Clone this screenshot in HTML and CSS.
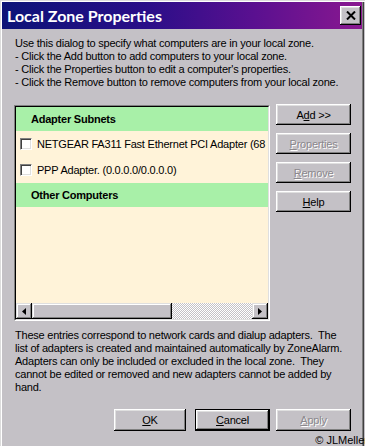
FILE: index.html
```html
<!DOCTYPE html>
<html>
<head>
<meta charset="utf-8">
<title>Local Zone Properties</title>
<link rel="stylesheet" href="styles.css">
</head>
<body>
<div class="window">
  <div class="titlebar">
    <span class="title">Local Zone Properties</span>
    <button class="close" aria-label="Close"><svg width="10" height="9" viewBox="0 0 10 9"><path d="M1 0.5 L9 8.5 M9 0.5 L1 8.5" stroke="#000" stroke-width="2" fill="none"/></svg></button>
  </div>
  <div class="content">
    <p class="intro">Use this dialog to specify what computers are in your local zone.<br>- Click the Add button to add computers to your local zone.<br>- Click the Properties button to edit a computer's properties.<br>- Click the Remove button to remove computers from your local zone.</p>
    <div class="main">
      <div class="listbox">
        <div class="listbox-inner">
          <div class="list">
            <div class="group">Adapter Subnets</div>
            <div class="item"><span class="check"></span><span class="label">NETGEAR FA311 Fast Ethernet PCI Adapter (68</span></div>
            <div class="item"><span class="check"></span><span class="label">PPP Adapter. (0.0.0.0/0.0.0.0)</span></div>
            <div class="group">Other Computers</div>
          </div>
          <div class="hscroll">
            <span class="sb-btn"><svg width="4" height="7" viewBox="0 0 4 7"><path d="M4 0 L0 3.5 L4 7 Z" fill="#000"/></svg></span>
            <span class="thumb"></span>
            <span class="track"></span>
            <span class="sb-btn"><svg width="4" height="7" viewBox="0 0 4 7"><path d="M0 0 L4 3.5 L0 7 Z" fill="#000"/></svg></span>
          </div>
        </div>
      </div>
      <div class="side">
        <button class="btn">A<u>d</u>d &gt;&gt;</button>
        <button class="btn disabled"><u>P</u>roperties</button>
        <button class="btn disabled"><u>R</u>emove</button>
        <button class="btn"><u>H</u>elp</button>
      </div>
    </div>
    <p class="note">These entries correspond to network cards and dialup adapters.&nbsp; The<br>list of adapters is created and maintained automatically by ZoneAlarm.<br>Adapters can only be included or excluded in the local zone.&nbsp; They<br>cannot be edited or removed and new adapters cannot be added by<br>hand.</p>
    <div class="footer">
      <button class="btn ok"><u>O</u>K</button>
      <button class="btn cancel default"><u>C</u>ancel</button>
      <button class="btn apply disabled"><u>A</u>pply</button>
    </div>
  </div>
  <div class="copyright">© JLMeller</div>
</div>
</body>
</html>
```

FILE: styles.css
```css
* {
  box-sizing: border-box;
  margin: 0;
  padding: 0;
}

html, body {
  width: 365px;
  height: 446px;
  overflow: hidden;
  background: #c4c1c6;
}

body {
  font-family: "Liberation Sans", Arial, sans-serif;
  font-size: 11px;
  letter-spacing: -0.22px;
  color: #000;
}

.window {
  position: relative;
  width: 365px;
  height: 446px;
  padding: 2px 3px 0 2px;
  display: flex;
  flex-direction: column;
  background: #c4c1c6;
  box-shadow: inset 1px 1px #dcdcdc, inset 2px 2px #fff, inset -1px 0 #c4c1c6, inset -2px 0 #404040, inset -3px 0 #808080;
}

.titlebar {
  height: 27px;
  flex: none;
  display: flex;
  align-items: center;
  justify-content: space-between;
  padding: 0 1px 0 5px;
  background: linear-gradient(90deg, #0c1478 0%, #2a0e88 40%, #5a1090 70%, #8a1890 100%);
}

.title {
  font-family: Lato, "Open Sans", sans-serif;
  font-weight: bold;
  font-size: 16px;
  letter-spacing: 0;
  color: #fff;
}

.close {
  width: 21px;
  height: 19px;
  display: flex;
  align-items: center;
  justify-content: center;
  border: none;
  background: #c4c1c6;
  box-shadow: inset -1px -1px #000, inset 1px 1px #fff, inset -2px -2px #808080, inset 2px 2px #dfdfdf;
}

.content {
  flex: 1;
  display: flex;
  flex-direction: column;
  padding: 8px 11px 0 12px;
}

.intro,
.note {
  line-height: 13px;
  padding-left: 1px;
  white-space: nowrap;
}

.main {
  display: flex;
  gap: 6px;
  margin-top: 15px;
}

.listbox {
  width: 256px;
  height: 216px;
  flex: none;
  margin-top: 1px;
  border: 1px solid;
  border-color: #808080 #fff #fff #808080;
}

.listbox-inner {
  height: 100%;
  border: 1px solid;
  border-color: #000 #dfdfdf #dfdfdf #000;
  display: flex;
  flex-direction: column;
}

.list {
  height: 196px;
  flex: none;
  background: #fff3d9;
  overflow: hidden;
}

.group {
  height: 24px;
  line-height: 24px;
  padding-left: 15px;
  background: #a8f0a8;
  font-weight: bold;
}

.item {
  height: 26px;
  display: flex;
  align-items: center;
  padding-left: 4px;
  white-space: nowrap;
}

.check {
  width: 12px;
  height: 12px;
  flex: none;
  margin-right: 5px;
  background: #fff;
  border: 1px solid;
  border-color: #808080 #fff #fff #808080;
  box-shadow: inset 1px 1px #404040, inset -1px -1px #dfdfdf;
}

.hscroll {
  height: 16px;
  flex: none;
  display: flex;
}

.sb-btn {
  width: 16px;
  height: 16px;
  display: flex;
  align-items: center;
  justify-content: center;
  background: #c4c1c6;
  box-shadow: inset -1px -1px #000, inset 1px 1px #dfdfdf, inset -2px -2px #808080, inset 2px 2px #fff;
}

.thumb {
  width: 140px;
  height: 16px;
  background: #c4c1c6;
  box-shadow: inset -1px -1px #000, inset 1px 1px #dfdfdf, inset -2px -2px #808080, inset 2px 2px #fff;
}

.track {
  flex: 1;
  background: repeating-conic-gradient(#fff 0 25%, #c4c1c6 0 50%) 0 0 / 2px 2px;
}

.side {
  width: 75px;
  display: flex;
  flex-direction: column;
  gap: 8px;
}

.btn {
  width: 75px;
  height: 21px;
  border: none;
  background: #c4c1c6;
  font: inherit;
  letter-spacing: inherit;
  color: #000;
  box-shadow: inset -1px -1px #000, inset 1px 1px #fff, inset -2px -2px #808080, inset 2px 2px #dfdfdf;
}

.btn.disabled {
  color: #8b888d;
  text-shadow: 1px 1px #fff;
}

.note {
  margin-top: 8px;
}

.footer {
  display: flex;
  justify-content: flex-end;
  margin-top: 15px;
}

.footer .btn {
  height: 22px;
}

.footer .ok {
  width: 72px;
  margin-right: 9px;
}

.footer .cancel {
  margin-right: 6px;
}

.btn.default {
  box-shadow: inset 0 0 0 1px #000, inset -2px -2px #000, inset 2px 2px #fff, inset -3px -3px #808080, inset 3px 3px #dfdfdf;
}

.copyright {
  position: absolute;
  right: -3px;
  bottom: 0;
  font-size: 11px;
  line-height: 11px;
  letter-spacing: 0;
  white-space: nowrap;
}
```
